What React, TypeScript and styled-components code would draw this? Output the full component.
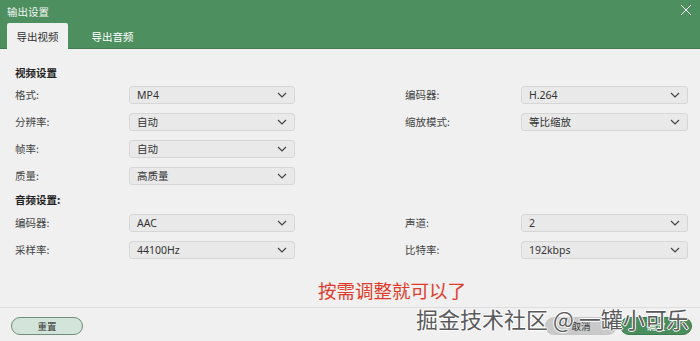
import styled, { createGlobalStyle } from "styled-components";

const GlobalStyle = createGlobalStyle`
    html, body {
        margin: 0;
        padding: 0;
        background: #f0f0f0;
    }
    body {
        font-family: "Noto Sans CJK SC", "Noto Sans", sans-serif;
    }
`;

const Window = styled.div`
    position: relative;
    width: 700px;
    height: 341px;
    display: flex;
    flex-direction: column;
    background: #f0f0f0;
    overflow: hidden;
`;

const Header = styled.div`
    height: 48px;
    background: #4e8f5f;
    border-bottom: 1px solid #3f7c50;
    display: flex;
    flex-direction: column;
`;

const TitleRow = styled.div`
    height: 23px;
    display: flex;
    align-items: center;
    justify-content: space-between;
    padding: 0 8px 0 7px;
`;

const Title = styled.span`
    color: #f2f7f3;
    font-size: 10.5px;
`;

const Close = styled.svg`
    width: 12px;
    height: 12px;
    margin-top: -4px;
`;

const Tabs = styled.div`
    display: flex;
    align-items: flex-end;
    flex: 1;
    padding-left: 7px;
    gap: 14px;
`;

const Tab = styled.div<{ $active?: boolean }>`
    height: 25px;
    width: 61px;
    display: flex;
    align-items: center;
    justify-content: center;
    font-size: 10.5px;
    border-radius: 2px 2px 0 0;
    background: ${(p) => (p.$active ? "#f0f0f0" : "transparent")};
    color: ${(p) => (p.$active ? "#333" : "#fff")};
    margin-bottom: -1px;
    ${(p) => (p.$active ? "height: 26px;" : "")}
`;

const Body = styled.div`
    flex: 1;
    padding: 14px 0 0 15px;
`;

const SectionTitle = styled.div<{ $h: number }>`
    height: ${(p) => p.$h}px;
    display: flex;
    align-items: center;
    font-size: 10.5px;
    font-weight: bold;
    color: #222;
`;

const Grid = styled.div`
    display: grid;
    grid-template-columns: 114px 166px 110px 116px 167px;
    grid-auto-rows: 27px;
    align-items: center;
`;

const Label = styled.span`
    font-size: 10.5px;
    color: #444;
`;

const Select = styled.div`
    height: 18px;
    box-sizing: border-box;
    border: 1px solid #d6d6d6;
    border-radius: 3px;
    background: #e9e9e9;
    display: flex;
    align-items: center;
    justify-content: space-between;
    padding: 0 7px 0 7px;
    font-size: 10.5px;
    color: #333;
    font-family: "Noto Sans", "Noto Sans CJK SC", sans-serif;
`;

const Chevron = styled.svg`
    width: 10px;
    height: 6px;
`;

const Hint = styled.div`
    margin: 15px 0 0 303px;
    height: 24px;
    line-height: 24px;
    font-size: 18.5px;
    color: #e03b2b;
`;

const Footer = styled.div`
    height: 34px;
    box-sizing: border-box;
    border-top: 1px solid #dedede;
    display: flex;
    align-items: flex-start;
    padding: 9px 8px 0 11px;
    gap: 3px;
`;

const Button = styled.button<{ $kind: "reset" | "cancel" | "ok" }>`
    width: 72px;
    height: 18px;
    border-radius: 9px;
    font-family: "Noto Sans CJK SC", sans-serif;
    font-size: 9.5px;
    padding: 0;
    display: flex;
    align-items: center;
    justify-content: center;
    border: 1px solid
        ${(p) => (p.$kind === "reset" ? "#6f8d7b" : p.$kind === "ok" ? "#3d7d4e" : "#c6c6c6")};
    background: ${(p) =>
        p.$kind === "reset" ? "#d3e4da" : p.$kind === "ok" ? "#4b8c5c" : "#c9c9c9"};
    color: ${(p) => (p.$kind === "ok" ? "#fff" : "#333")};
    ${(p) => (p.$kind === "cancel" ? "margin-left: auto;" : "")}
`;

const Watermark = styled.div`
    position: absolute;
    left: 416px;
    top: 303px;
    font-size: 22px;
    line-height: 30px;
    color: #5a5a5a;
    white-space: nowrap;
    text-shadow: -1px 0 #fff, 1px 0 #fff, 0 -1px #fff, 0 1px #fff;
    pointer-events: none;
`;

type Field = { label: string; value: string };

const ChevronIcon = () => (
    <Chevron viewBox="0 0 10 6">
        <path d="M1 1 L5 5 L9 1" fill="none" stroke="#444" strokeWidth="1.2" />
    </Chevron>
);

function Row({ left, right }: { left: Field; right?: Field }) {
    return (
        <>
            <Label>{left.label}</Label>
            <Select>
                {left.value}
                <ChevronIcon />
            </Select>
            <span />
            {right ? <Label>{right.label}</Label> : <span />}
            {right ? (
                <Select>
                    {right.value}
                    <ChevronIcon />
                </Select>
            ) : (
                <span />
            )}
        </>
    );
}

export default function App() {
    return (
        <Window>
            <GlobalStyle />
            <Header>
                <TitleRow>
                    <Title>输出设置</Title>
                    <Close viewBox="0 0 12 12">
                        <path d="M1 1 L11 11 M11 1 L1 11" stroke="#fff" strokeWidth="1" />
                    </Close>
                </TitleRow>
                <Tabs>
                    <Tab $active>导出视频</Tab>
                    <Tab>导出音频</Tab>
                </Tabs>
            </Header>
            <Body>
                <SectionTitle $h={18}>视频设置</SectionTitle>
                <Grid>
                    <Row left={{ label: "格式:", value: "MP4" }} right={{ label: "编码器:", value: "H.264" }} />
                    <Row left={{ label: "分辨率:", value: "自动" }} right={{ label: "缩放模式:", value: "等比缩放" }} />
                    <Row left={{ label: "帧率:", value: "自动" }} />
                    <Row left={{ label: "质量:", value: "高质量" }} />
                </Grid>
                <SectionTitle $h={20}>音频设置:</SectionTitle>
                <Grid>
                    <Row left={{ label: "编码器:", value: "AAC" }} right={{ label: "声道:", value: "2" }} />
                    <Row left={{ label: "采样率:", value: "44100Hz" }} right={{ label: "比特率:", value: "192kbps" }} />
                </Grid>
                <Hint>按需调整就可以了</Hint>
            </Body>
            <Footer>
                <Button $kind="reset">重置</Button>
                <Button $kind="cancel">取消</Button>
                <Button $kind="ok">确定</Button>
            </Footer>
            <Watermark>掘金技术社区 @ 一罐小可乐</Watermark>
        </Window>
    );
}
